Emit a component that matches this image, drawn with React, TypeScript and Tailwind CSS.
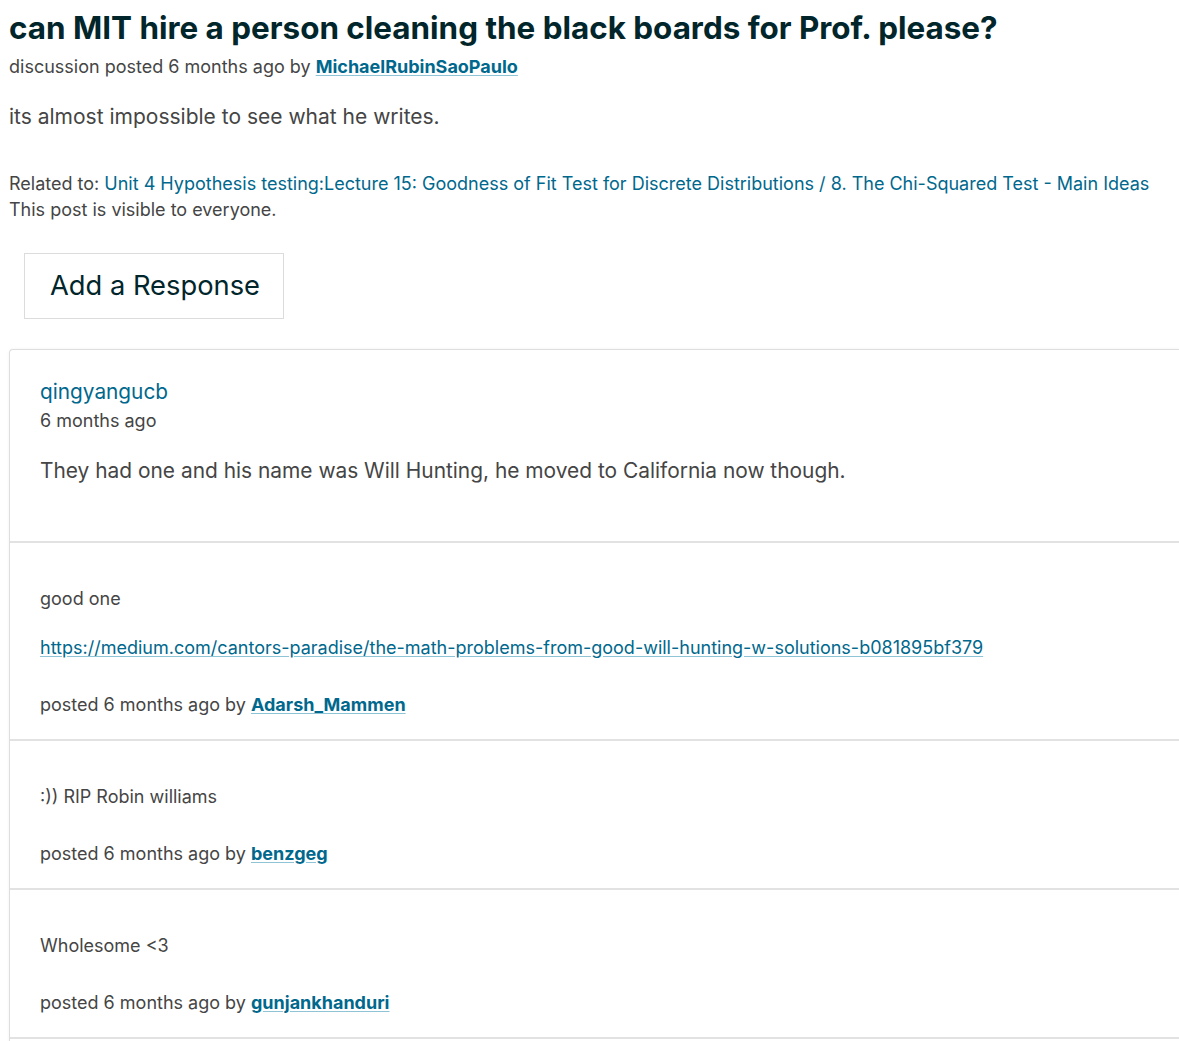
import React from "react";

const comments = [
  {
    body: ["good one"],
    link: "https://medium.com/cantors-paradise/the-math-problems-from-good-will-hunting-w-solutions-b081895bf379",
    author: "Adarsh_Mammen",
  },
  { body: [":)) RIP Robin williams"], author: "benzgeg" },
  { body: ["Wholesome <3"], author: "gunjankhanduri" },
];

function Author({ name }: { name: string }) {
  return (
    <a href="#" className="font-bold text-[#00688d] underline decoration-[#8fc3d6] underline-offset-2">
      {name}
    </a>
  );
}

export default function App() {
  return (
    <main className="min-h-screen bg-white font-['Inter',sans-serif] text-[#454545] overflow-hidden">
      <div className="pl-[9px]">
        <h1 className="text-[31.4px] leading-[38px] font-bold text-[#00262b] pt-[9px] whitespace-nowrap">
          can MIT hire a person cleaning the black boards for Prof. please?
        </h1>
        <p className="text-[18px] leading-[26px] mt-[7px]">
          discussion posted 6 months ago by <Author name="MichaelRubinSaoPaulo" />
        </p>
        <p className="text-[21px] leading-[30px] mt-[22px]">its almost impossible to see what he writes.</p>
        <p className="text-[18px] leading-[26px] mt-[39px] whitespace-nowrap">
          Related to:{" "}
          <a href="#" className="text-[#00688d]">
            Unit 4 Hypothesis testing:Lecture 15: Goodness of Fit Test for Discrete Distributions / 8. The Chi-Squared Test - Main Ideas
          </a>
        </p>
        <p className="text-[18px] leading-[26px]">This post is visible to everyone.</p>
      </div>

      <div className="pl-[24px] mt-[30px]">
        <button className="border border-[#dcdcdc] pl-[25px] h-[66px] w-[260px] text-left text-[27.3px] leading-[34px] whitespace-nowrap text-[#00262b]">
          Add a Response
        </button>
      </div>

      <div className="ml-[9px] mt-[30px] border border-r-0 border-[#dedede] rounded-tl-[4px] shadow-[0_0_3px_rgba(0,0,0,0.06)]">
        <div className="pl-[30px] pt-[28px] pb-[55px]">
          <a href="#" className="block text-[20.8px] leading-[28px] text-[#00688d]">qingyangucb</a>
          <p className="text-[18px] leading-[26px] mt-[2px]">6 months ago</p>
          <p className="text-[20.9px] leading-[30px] mt-[22px]">
            They had one and his name was Will Hunting, he moved to California now though.
          </p>
        </div>
        {comments.map((c) => (
          <div key={c.author} className="border-t-2 border-[#e2e2e2] pl-[30px] pt-[43px] pb-[21px]">
            {c.body.map((b) => (
              <p key={b} className="text-[18px] leading-[26px]">{b}</p>
            ))}
            {c.link && (
              <p className="text-[18px] leading-[26px] mt-[23px]">
                <a href={c.link} className="text-[#00688d] underline decoration-[#8fc3d6] underline-offset-2">
                  {c.link}
                </a>
              </p>
            )}
            <p className="text-[18px] leading-[26px] mt-[31px]">
              posted 6 months ago by <Author name={c.author} />
            </p>
          </div>
        ))}
        <div className="border-t-2 border-[#e2e2e2] h-[20px]" />
      </div>
    </main>
  );
}
